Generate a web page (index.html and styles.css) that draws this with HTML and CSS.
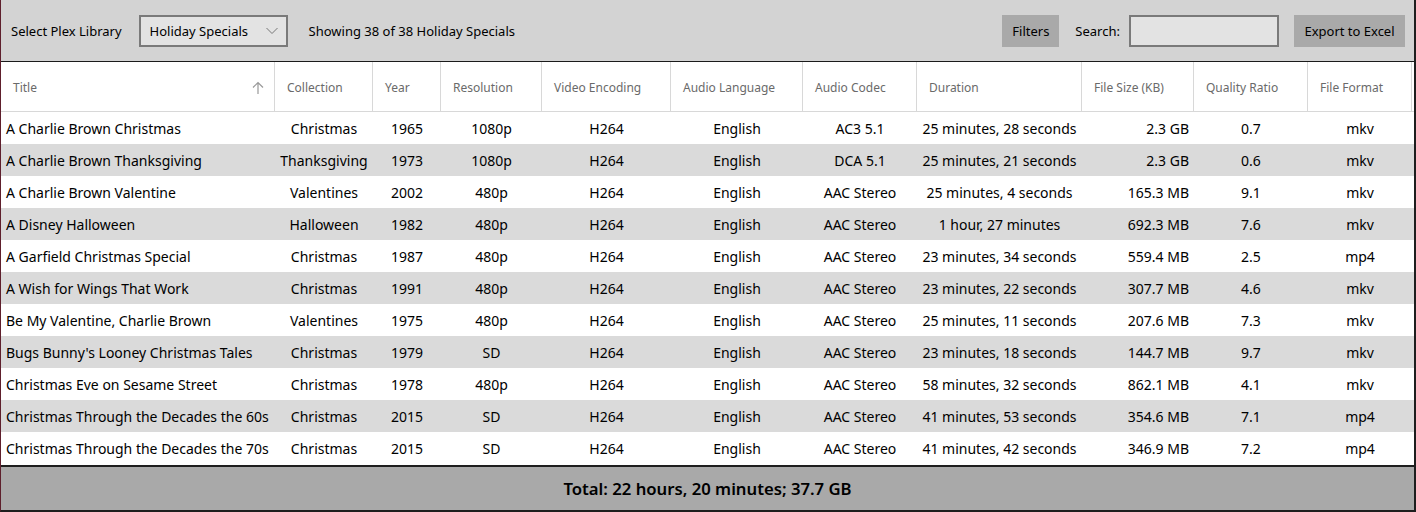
FILE: index.html
```html
<!DOCTYPE html>
<html>
<head>
<meta charset="utf-8">
<link rel="stylesheet" href="styles.css">
</head>
<body>
<div class="window">
  <div class="toolbar">
    <span class="label">Select Plex Library</span>
    <div class="combo"><span>Holiday Specials</span>
      <svg class="chev" width="12" height="8" viewBox="0 0 12 8"><path d="M0.5 1 L6 6.5 L11.5 1" fill="none" stroke="#777" stroke-width="1"/></svg>
    </div>
    <span class="label showing">Showing 38 of 38 Holiday Specials</span>
    <div class="spacer"></div>
    <div class="btn filters">Filters</div>
    <span class="label search-label">Search:</span>
    <div class="search"></div>
    <div class="btn export">Export to Excel</div>
  </div>
  <div class="grid">
    <div class="hrow">
      <div class="h c1">Title<svg class="sort" width="12" height="14" viewBox="0 0 12 14"><path d="M6 13 V1.5 M1 6.5 L6 1.5 L11 6.5" fill="none" stroke="#999" stroke-width="1.2"/></svg></div>
      <div class="h c2">Collection</div>
      <div class="h c3">Year</div>
      <div class="h c4">Resolution</div>
      <div class="h c5">Video Encoding</div>
      <div class="h c6">Audio Language</div>
      <div class="h c7">Audio Codec</div>
      <div class="h c8">Duration</div>
      <div class="h c9">File Size (KB)</div>
      <div class="h c10">Quality Ratio</div>
      <div class="h c11">File Format</div>
      <div class="h c12"></div>
    </div>
    <div class="rows" id="rows"></div>
  </div>
  <div class="footer">Total: 22 hours, 20 minutes; 37.7 GB</div>
</div>
<script src="app.js"></script>
</body>
</html>
```

FILE: app.js
```js
const data = [
 ["A Charlie Brown Christmas","Christmas","1965","1080p","H264","English","AC3 5.1","25 minutes, 28 seconds","2.3 GB","0.7","mkv"],
 ["A Charlie Brown Thanksgiving","Thanksgiving","1973","1080p","H264","English","DCA 5.1","25 minutes, 21 seconds","2.3 GB","0.6","mkv"],
 ["A Charlie Brown Valentine","Valentines","2002","480p","H264","English","AAC Stereo","25 minutes, 4 seconds","165.3 MB","9.1","mkv"],
 ["A Disney Halloween","Halloween","1982","480p","H264","English","AAC Stereo","1 hour, 27 minutes","692.3 MB","7.6","mkv"],
 ["A Garfield Christmas Special","Christmas","1987","480p","H264","English","AAC Stereo","23 minutes, 34 seconds","559.4 MB","2.5","mp4"],
 ["A Wish for Wings That Work","Christmas","1991","480p","H264","English","AAC Stereo","23 minutes, 22 seconds","307.7 MB","4.6","mkv"],
 ["Be My Valentine, Charlie Brown","Valentines","1975","480p","H264","English","AAC Stereo","25 minutes, 11 seconds","207.6 MB","7.3","mkv"],
 ["Bugs Bunny's Looney Christmas Tales","Christmas","1979","SD","H264","English","AAC Stereo","23 minutes, 18 seconds","144.7 MB","9.7","mkv"],
 ["Christmas Eve on Sesame Street","Christmas","1978","480p","H264","English","AAC Stereo","58 minutes, 32 seconds","862.1 MB","4.1","mkv"],
 ["Christmas Through the Decades the 60s","Christmas","2015","SD","H264","English","AAC Stereo","41 minutes, 53 seconds","354.6 MB","7.1","mp4"],
 ["Christmas Through the Decades the 70s","Christmas","2015","SD","H264","English","AAC Stereo","41 minutes, 42 seconds","346.9 MB","7.2","mp4"]
];
const rows = document.getElementById('rows');
data.forEach((r, i) => {
  const row = document.createElement('div');
  row.className = 'row' + (i % 2 ? ' alt' : '');
  r.forEach((v, j) => {
    const c = document.createElement('div');
    c.className = 'd c' + (j + 1);
    c.textContent = v;
    row.appendChild(c);
  });
  const e = document.createElement('div');
  e.className = 'd c12';
  row.appendChild(e);
  rows.appendChild(row);
});
```

FILE: styles.css
```css
* { box-sizing: border-box; }
html, body { margin: 0; padding: 0; }
body {
  width: 1416px;
  height: 512px;
  overflow: hidden;
  font-family: "Noto Sans", "Open Sans", sans-serif;
  background: #ffffff;
}
.window {
  width: 1416px;
  height: 512px;
  border-left: 1px solid #5e1f2c;
  border-right: 2px solid #1e1e1e;
  border-bottom: 2px solid #1e1e1e;
  display: flex;
  flex-direction: column;
}
.toolbar {
  height: 62px;
  flex: none;
  background: #d3d3d3;
  border-bottom: 1px solid #1a1a1a;
  display: flex;
  align-items: center;
  padding: 0 9px 0 10px;
  font-size: 13px;
  color: #000;
}
.label { white-space: nowrap; }
.combo {
  margin-left: 17px;
  width: 149px;
  height: 32px;
  border: 2px solid #7a7a7a;
  background: #e3e3e3;
  display: flex;
  align-items: center;
  justify-content: space-between;
  padding: 0 8px 0 9px;
}
.showing { margin-left: 21px; }
.spacer { flex: 1; }
.btn {
  height: 32px;
  background: #a9a9a9;
  display: flex;
  align-items: center;
  justify-content: center;
}
.filters { width: 57px; }
.search-label { margin-left: 16px; }
.search {
  margin-left: 9px;
  width: 150px;
  height: 32px;
  border: 2px solid #7a7a7a;
  background: #e3e3e3;
}
.export { width: 111px; margin-left: 15px; }

.grid { flex: 1; display: flex; flex-direction: column; overflow: hidden; background: #fff; }
.hrow {
  height: 50px;
  flex: none;
  display: flex;
  border-bottom: 1px solid #d8d8d8;
}
.h {
  display: flex;
  align-items: center;
  padding-left: 12px;
  padding-top: 2px;
  font-size: 12px;
  color: #6a6a6a;
  border-right: 1px solid #d8d8d8;
  white-space: nowrap;
  flex: none;
}
.h.c1 { justify-content: space-between; padding-right: 10px; }
.h.c12 { border-right: none; padding: 0; flex: 1; }
.c1 { width: 274px; }
.c2 { width: 98px; }
.c3 { width: 68px; }
.c4 { width: 101px; }
.c5 { width: 129px; }
.c6 { width: 132px; }
.c7 { width: 114px; }
.c8 { width: 165px; }
.c9 { width: 112px; }
.c10 { width: 114px; }
.c11 { width: 104px; }
.c12 { flex: 1; }

.rows { flex: 1; overflow: hidden; }
.row {
  height: 32px;
  display: flex;
  align-items: center;
  font-size: 14px;
  color: #000;
}
.row.alt { background: #dadada; }
.d { text-align: center; white-space: nowrap; flex: none; }
.d.c12 { flex: 1; }
.d.c1 { text-align: left; padding-left: 5px; }
.d.c9 { text-align: right; padding-right: 5px; }

.footer {
  height: 45px;
  flex: none;
  background: #a9a9a9;
  border-top: 2px solid #1e1e1e;
  display: flex;
  align-items: center;
  justify-content: center;
  font-size: 16.7px;
  font-weight: 600;
  color: #000;
}
```
